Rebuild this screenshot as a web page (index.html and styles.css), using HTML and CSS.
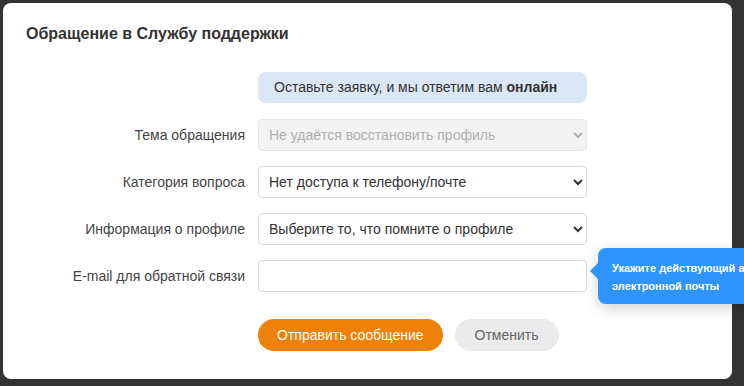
FILE: index.html
```html
<!DOCTYPE html>
<html lang="ru">
<head>
  <meta charset="UTF-8">
  <meta name="viewport" content="width=device-width, initial-scale=1.0">
  <title>Обращение в Службу поддержки</title>
  <link rel="stylesheet" href="styles.css">
</head>
<body>
  <div class="backdrop">
    <div class="modal">
      <h1 class="modal-title">Обращение в Службу поддержки</h1>

      <form class="support-form">
        <div class="row">
          <span class="label"></span>
          <div class="notice">Оставьте заявку, и мы ответим вам <b>онлайн</b></div>
        </div>

        <div class="row">
          <label class="label" for="topic">Тема обращения</label>
          <select id="topic" class="field" disabled>
            <option>Не удаётся восстановить профиль</option>
          </select>
        </div>

        <div class="row">
          <label class="label" for="category">Категория вопроса</label>
          <select id="category" class="field">
            <option>Нет доступа к телефону/почте</option>
          </select>
        </div>

        <div class="row">
          <label class="label" for="profile">Информация о профиле</label>
          <select id="profile" class="field">
            <option>Выберите то, что помните о профиле</option>
          </select>
        </div>

        <div class="row">
          <label class="label" for="email">E-mail для обратной связи</label>
          <div class="field-wrap">
            <input id="email" class="field" type="text" autocomplete="off">
            <!-- подсказка справа от поля -->
            <div class="hint">Укажите действующий адрес электронной почты</div>
          </div>
        </div>

        <div class="row buttons">
          <span class="label"></span>
          <div class="actions">
            <button type="button" class="btn btn-primary">Отправить сообщение</button>
            <button type="button" class="btn btn-cancel">Отменить</button>
          </div>
        </div>
      </form>
    </div>
  </div>
</body>
</html>
```

FILE: styles.css
```css
* {
  box-sizing: border-box;
}
html, body {
  margin: 0;
  padding: 0;
  height: 100%;
  overflow: hidden;
}
body {
  background: #333;
  font-family: 'Liberation Sans', Arial, sans-serif;
  color: #333;
}
.backdrop {
  padding: 3px;
}
.modal {
  width: 729px;
  height: 376px;
  background: #fff;
  border-radius: 8px;
  padding: 21px 23px;
}
.modal-title {
  margin: 0 0 28px;
  font-size: 16px;
  line-height: 20px;
  font-weight: bold;
  color: #333;
}
.support-form {
  display: flex;
  flex-direction: column;
  gap: 15px;
}
.row {
  display: grid;
  grid-template-columns: 219px 329px;
  column-gap: 13px;
  align-items: center;
}
.label {
  text-align: right;
  font-size: 14px;
  color: #444;
}
.notice {
  height: 31px;
  margin-bottom: 1px;
  padding: 0 16px;
  border-radius: 8px;
  background: #dae7f6;
  font-size: 14px;
  line-height: 31px;
  color: #333;
}
.field {
  width: 329px;
  height: 32px;
  padding: 0 6px;
  border: 1px solid #dcdcdc;
  border-radius: 4px;
  background: #fff;
  font-family: inherit;
  font-size: 14px;
  color: #333;
}
select.field:disabled {
  background: #f3f3f3;
  border-color: #e6e6e6;
  color: #b0b0b0;
  opacity: 1;
}
.field-wrap {
  position: relative;
}
/* синяя подсказка, выходит за край окна */
.hint {
  position: absolute;
  left: 340px;
  top: -12px;
  width: 240px;
  padding: 11px 14px 9px;
  background: #2d95fd;
  border-radius: 8px;
  box-shadow: 0 4px 14px rgba(0,0,0,0.18);
  color: #fff;
  font-size: 11px;
  line-height: 18px;
  font-weight: bold;
}
.hint::before {
  content: "";
  position: absolute;
  left: -8px;
  top: 15px;
  border-top: 8px solid transparent;
  border-bottom: 8px solid transparent;
  border-right: 8px solid #2d95fd;
}
.buttons {
  margin-top: 12px;
}
.actions {
  display: flex;
  gap: 12px;
}
.btn {
  height: 32px;
  padding: 0 20px;
  border: none;
  border-radius: 16px;
  font-family: inherit;
  font-size: 14px;
  cursor: pointer;
}
.btn-primary {
  padding: 0 19px;
  background: #ee8208;
  color: #fff;
}
.btn-cancel {
  background: #ebebeb;
  color: #666;
}
```
